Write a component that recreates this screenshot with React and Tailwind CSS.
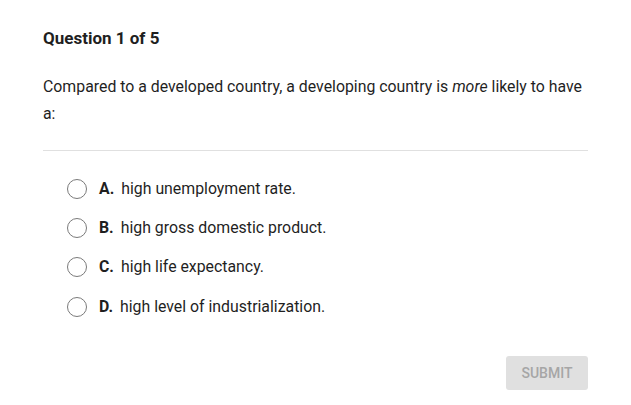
const options = [
  { letter: 'A.', text: 'high unemployment rate.' },
  { letter: 'B.', text: 'high gross domestic product.' },
  { letter: 'C.', text: 'high life expectancy.' },
  { letter: 'D.', text: 'high level of industrialization.' },
];

const App = () => {
  return (
    <div
      className="w-[631px] h-[405px] bg-white text-[#1f1f1f] px-[43px] pt-[28px]"
      style={{ fontFamily: 'Roboto, "Liberation Sans", sans-serif' }}
    >
      <h1 className="text-[17px] font-bold leading-[20px]">Question 1 of 5</h1>
      <p className="mt-[25px] text-[15.85px] leading-[27px]">
        Compared to a developed country, a developing country is <em>more</em> likely to have a:
      </p>
      <div className="mt-[23px] border-t border-[#e0e0e0]" />
      <div className="mt-[18px] pl-[24px] flex flex-col">
        {options.map((o) => (
          <label key={o.letter} className="flex items-center h-[39.3px] cursor-pointer">
            <span className="w-[20px] h-[20px] rounded-full border border-[#7a7a7a] bg-white shrink-0" />
            <span className="ml-[12px] text-[15.85px] font-bold">{o.letter}</span>
            <span className="ml-[7px] text-[15.85px]">{o.text}</span>
          </label>
        ))}
      </div>
      <div className="flex justify-end mt-[30px]">
        <button className="w-[82px] h-[34px] rounded-[3px] bg-[#e0e0e0] text-[#a6a6a6] text-[14px] font-medium">
          SUBMIT
        </button>
      </div>
    </div>
  );
};

export default App;
